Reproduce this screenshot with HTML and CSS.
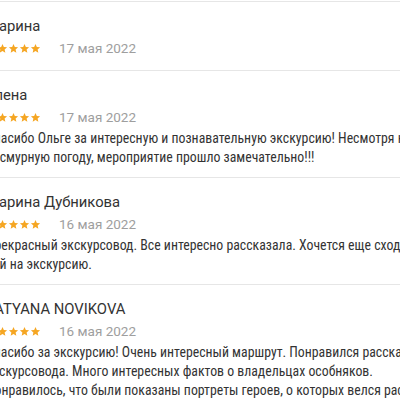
FILE: index.html
```html
<!DOCTYPE html>
<html lang="ru">
<head>
    <meta charset="UTF-8">
    <meta name="viewport" content="width=device-width, initial-scale=1.0">
    <title>Отзывы</title>
    <link rel="stylesheet" href="styles.css">
</head>
<body>
    <svg width="0" height="0" class="defs">
        <symbol id="star" viewBox="0 0 24 24">
            <path d="M12 2l2.9 6.9 7.1.6-5.4 4.7 1.6 7L12 17.5 5.8 21.2l1.6-7L2 9.5l7.1-.6z"/>
        </symbol>
    </svg>
    <div class="reviews">
        <div class="review">
            <div class="review-name">Марина</div>
            <div class="review-meta">
                <span class="stars">
                    <svg><use href="#star"/></svg><svg><use href="#star"/></svg><svg><use href="#star"/></svg><svg><use href="#star"/></svg><svg><use href="#star"/></svg>
                </span>
                <span class="review-date">17 мая 2022</span>
            </div>
        </div>
        <div class="review">
            <div class="review-name">Елена</div>
            <div class="review-meta">
                <span class="stars">
                    <svg><use href="#star"/></svg><svg><use href="#star"/></svg><svg><use href="#star"/></svg><svg><use href="#star"/></svg><svg><use href="#star"/></svg>
                </span>
                <span class="review-date">17 мая 2022</span>
            </div>
            <p class="review-text">Спасибо Ольге за интересную и познавательную экскурсию! Несмотря на пасмурную погоду, мероприятие прошло замечательно!!!</p>
        </div>
        <div class="review">
            <div class="review-name">Марина Дубникова</div>
            <div class="review-meta">
                <span class="stars">
                    <svg><use href="#star"/></svg><svg><use href="#star"/></svg><svg><use href="#star"/></svg><svg><use href="#star"/></svg><svg><use href="#star"/></svg>
                </span>
                <span class="review-date">16 мая 2022</span>
            </div>
            <p class="review-text">Прекрасный экскурсовод. Все интересно рассказала. Хочется еще сходить к ней на экскурсию.</p>
        </div>
        <div class="review">
            <div class="review-name">TATYANA NOVIKOVA</div>
            <div class="review-meta">
                <span class="stars">
                    <svg><use href="#star"/></svg><svg><use href="#star"/></svg><svg><use href="#star"/></svg><svg><use href="#star"/></svg><svg><use href="#star"/></svg>
                </span>
                <span class="review-date">16 мая 2022</span>
            </div>
            <p class="review-text">Спасибо за экскурсию! Очень интересный маршрут. Понравился рассказ экскурсовода. Много интересных фактов о владельцах особняков. Понравилось, что были показаны портреты героев, о которых велся рассказ.</p>
        </div>
    </div>
</body>
</html>
```

FILE: styles.css
```css
body {
    margin: 0;
    background: #fff;
    font-family: Roboto, "Noto Sans", sans-serif;
    color: #333;
    overflow: hidden;
}
.defs {
    position: absolute;
}
.reviews {
    width: 452px;
    margin-left: -14px;
    padding-top: 1px;
}
.review {
    border-top: 1px solid #e6e6e6;
    padding: 14px 0 10px;
}
.review-name {
    font-size: 14.8px;
    line-height: 20px;
    color: #333;
}
.review-meta {
    display: flex;
    align-items: center;
    height: 24px;
}
.stars {
    display: flex;
    margin-right: 18px;
}
.stars svg {
    width: 11px;
    height: 11px;
    fill: #f5a623;
}
.review-date {
    font-size: 13.5px;
    color: #9e9e9e;
}
.review-text {
    margin: 0;
    font-size: 13.8px;
    font-stretch: 75%;
    line-height: 19px;
    color: #333;
}
```
